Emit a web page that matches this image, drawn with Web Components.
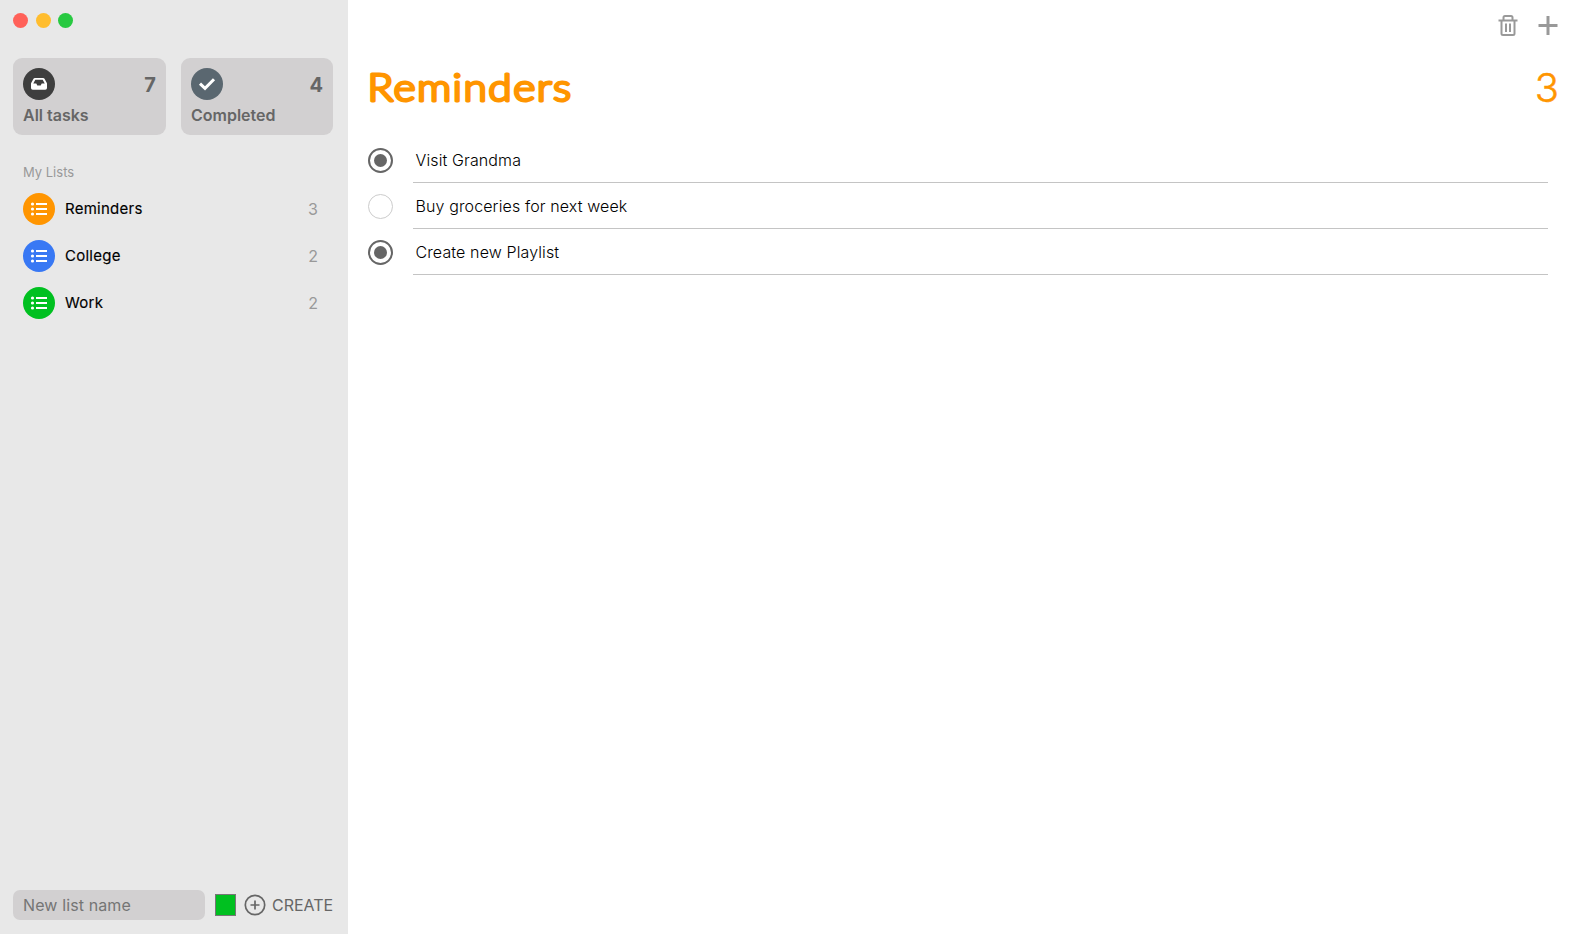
<!DOCTYPE html>
<html lang="en">
<head>
<meta charset="utf-8">
<title>Reminders</title>
<style>
body { margin: 0; font-family: Inter, "Liberation Sans", sans-serif; }
</style>
</head>
<body>
<reminders-app></reminders-app>
<script>
const define = (name, html) => customElements.define(name, class extends HTMLElement {
  constructor() {
    super();
    const t = document.createElement('template');
    t.innerHTML = html;
    this.attachShadow({ mode: 'open' }).append(t.content.cloneNode(true));
  }
});

define('window-dots', `
<style>
:host { display: flex; gap: 8px; height: 15px; }
i { width: 15px; height: 15px; border-radius: 50%; background: #ff6159; }
i:nth-of-type(2) { background: #ffbd2e; }
i:nth-of-type(3) { background: #28c941; margin-left: -1px; }
</style><i></i><i></i><i></i>`);

define('summary-card', `
<style>
:host { display: grid; grid-template-columns: 1fr auto; grid-template-rows: 32px 30px; box-sizing: border-box; height: 77px; padding: 10px 10px 0; border-radius: 9px; background: #d2d0d1; color: #666; }
.icon { width: 32px; height: 32px; border-radius: 50%; background: var(--tone); display: flex; align-items: center; justify-content: center; }
.count { font-size: 20px; line-height: 34px; font-weight: 700; }
.label { grid-column: 1 / 3; font-size: 16px; line-height: 20px; font-weight: 600; margin-top: 5px; white-space: nowrap; }
</style>
<div class="icon"><slot name="icon"></slot></div><div class="count"><slot name="count"></slot></div><div class="label"><slot></slot></div>`);

define('list-row', `
<style>
:host { display: flex; align-items: center; height: 32px; padding: 0 15px 0 10px; }
.icon { width: 32px; height: 32px; border-radius: 50%; background: var(--tone); margin-right: 10px; }
.name { flex: 1; font-size: 15px; line-height: 18px; padding-bottom: 1px; font-weight: 400; color: #000; letter-spacing: .25px; -webkit-text-stroke: .15px #000; }
.count { font-size: 16px; color: #999; }
svg { display: block; }
</style>
<div class="icon"><svg width="32" height="32" fill="#fff"><circle cx="9.5" cy="11" r="1.6"/><circle cx="9.5" cy="16" r="1.6"/><circle cx="9.5" cy="21" r="1.6"/><path d="M13 10h11v2H13zM13 15h11v2H13zM13 20h11v2H13z"/></svg></div>
<div class="name"><slot></slot></div><div class="count"><slot name="count"></slot></div>`);

define('create-bar', `
<style>
:host { display: flex; align-items: center; height: 30px; color: #666; font-size: 16px; }
.field, .swatch, svg { flex: none; }
.field { box-sizing: border-box; width: 192px; height: 30px; line-height: 30px; padding-left: 10px; border-radius: 7px; background: #d2d0d1; color: #757575; font-weight: 400; letter-spacing: .12px; }
.swatch { box-sizing: border-box; width: 21px; height: 22px; border: 1px solid #777; background: #00c020; margin: 0 8px 0 10px; }
svg { margin-right: 5px; }
</style>
<div class="field">New list name</div><div class="swatch"></div>
<svg width="23" height="23" fill="none" stroke="#666" stroke-width="1.7"><circle cx="11" cy="11" r="9.7"/><path d="M11 6.500v9M6.500 11h9"/></svg><span>CREATE</span>`);

define('side-bar', `
<style>
:host { display: flex; flex-direction: column; box-sizing: border-box; width: 348px; height: 934px; padding: 13px 15px 14px 13px; background: #e8e8e8; }
.cards { display: grid; grid-template-columns: 153px 152px; gap: 15px; margin-top: 30px; }
.heading { margin: 29px 0 12px 10px; height: 17px; line-height: 17px; font-size: 13px; font-weight: 400; color: #999; }
.lists { display: flex; flex-direction: column; gap: 15px; flex: 1; }
svg { display: block; }
</style>
<window-dots></window-dots>
<div class="cards">
<summary-card style="--tone:#3e3e3e"><svg slot="icon" width="32" height="32"><path fill="#fff" fill-rule="evenodd" d="M12 10h8q1 0 1.500.8l2.200 4q.3.5.3 1v4.200q0 1.800-1.800 1.800H9.800q-1.800 0-1.800-1.800V15.800q0-.5.3-1l2.200-4Q11 10 12 10zM12.300 11.800l-2 3.800h3l1 2h3.400l1-2h3l-2-3.800z"/></svg><span slot="count">7</span>All tasks</summary-card>
<summary-card style="--tone:#5a6770"><svg slot="icon" width="32" height="32"><path fill="none" stroke="#fff" stroke-width="3" d="M9 15.600l5 4.700 9-9"/></svg><span slot="count">4</span>Completed</summary-card>
</div>
<div class="heading">My Lists</div>
<div class="lists">
<list-row style="--tone:#ff9500">Reminders<span slot="count">3</span></list-row>
<list-row style="--tone:#3878f4">College<span slot="count">2</span></list-row>
<list-row style="--tone:#00c020">Work<span slot="count">2</span></list-row>
</div>
<create-bar></create-bar>`);

define('task-row', `
<style>
:host { display: flex; align-items: flex-start; height: 46px; }
.radio { box-sizing: border-box; width: 25px; height: 25px; border: 1px solid #ccc; border-radius: 50%; margin: 9px 20px 0 0; display: flex; align-items: center; justify-content: center; }
:host([done]) .radio { border: 2px solid #666; }
:host([done]) .radio::after { content: ""; width: 13px; height: 13px; border-radius: 50%; background: #666; }
.text { flex: 1; box-sizing: border-box; height: 45px; line-height: 44px; border-bottom: 1px solid #c4c4c4; padding-left: 2.500px; font-size: 16px; font-weight: 300; color: #000; margin-top: -1px; letter-spacing: .12px; }
</style>
<div class="radio"></div><div class="text"><slot></slot></div>`);

define('task-panel', `
<style>
:host { display: flex; flex-direction: column; flex: 1; background: #fff; }
.tools { display: flex; justify-content: flex-end; gap: 20px; padding: 15px 20.500px 0 0; height: 36px; }
.head { display: flex; justify-content: space-between; padding: 0 20px; height: 88px; color: #ff9500; }
.head b { font-weight: 300; font-size: 40px; line-height: 74px; -webkit-text-stroke: .5px #ff9500; margin-right: -1px; }
.tasks { display: flex; flex-direction: column; padding: 0 30px 0 20px; }
svg { display: block; }
text { font-family: Lato, sans-serif; font-size: 38px; font-weight: 300; letter-spacing: 1.300px; fill: #ff9500; stroke: #ff9500; stroke-width: 2.900px; stroke-linejoin: round; }
</style>
<div class="tools">
<svg width="20" height="22" fill="none" stroke="#999" stroke-width="2"><path d="M.5 5.500h19M3.500 5.500V18.500q0 1.500 1.500 1.500h10q1.500 0 1.500-1.500V5.500M5.500 5V2.500q0-1.500 1.500-1.500h6q1.500 0 1.500 1.500V5"/><path stroke-width="2" d="M8 8.500v8.500M12 8.500v8.500"/></svg>
<svg width="20" height="22" fill="none" stroke="#999" stroke-width="3"><path d="M.500 10.500h19M10 1v19"/></svg>
</div>
<div class="head"><svg width="220" height="74"><text x="-0.500" y="50" textLength="205" lengthAdjust="spacingAndGlyphs">Reminders</text></svg><b>3</b></div>
<div class="tasks">
<task-row done>Visit Grandma</task-row>
<task-row>Buy groceries for next week</task-row>
<task-row done>Create new Playlist</task-row>
</div>`);

define('reminders-app', `
<style>:host { display: flex; height: 934px; overflow: hidden; }</style>
<side-bar></side-bar><task-panel></task-panel>`);
</script>
</body>
</html>
